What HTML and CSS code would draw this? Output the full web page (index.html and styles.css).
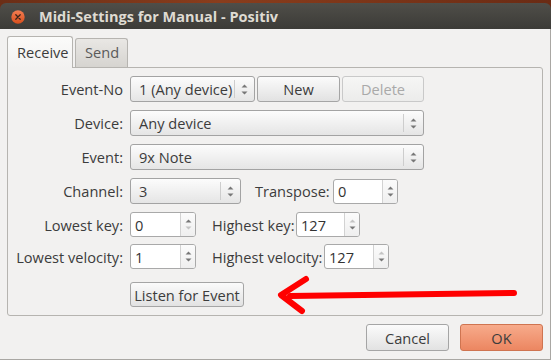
FILE: index.html
```html
<!DOCTYPE html>
<html>
<head>
<meta charset="utf-8">
<link rel="stylesheet" href="styles.css">
</head>
<body>
<div class="window">
  <div class="titlebar">
    <span class="close">
      <svg width="14" height="14" viewBox="0 0 14 14">
        <defs>
          <linearGradient id="cg" x1="0" y1="0" x2="0" y2="1">
            <stop offset="0" stop-color="#f47d52"/>
            <stop offset="1" stop-color="#d84f1d"/>
          </linearGradient>
        </defs>
        <circle cx="7" cy="7" r="6.7" fill="url(#cg)"/>
        <path d="M4.8 4.8 L9.2 9.2 M9.2 4.8 L4.8 9.2" stroke="#3d2418" stroke-width="1.3" stroke-linecap="round"/>
      </svg>
    </span>
    <span class="title">Midi-Settings for Manual - Positiv</span>
  </div>
  <div class="content">
    <div class="tabs">
      <div class="tab active">Receive</div>
      <div class="tab">Send</div>
    </div>
    <div class="frame">
      <div class="row row-combo">
        <span class="lbl">Event-No</span>
        <div class="combo w-eventno"><span class="val">1 (Any device)</span><span class="sep"></span><span class="arrows"><svg width="7" height="13" viewBox="0 0 7 13"><path d="M0.5 4.5 L3.5 1.5 L6.5 4.5Z M0.5 8.5 L3.5 11.5 L6.5 8.5Z" fill="#777"/></svg></span></div>
        <button class="btn new">New</button>
        <button class="btn delete" disabled>Delete</button>
      </div>
      <div class="row row-combo">
        <span class="lbl">Device:</span>
        <div class="combo w-full"><span class="val">Any device</span><span class="sep"></span><span class="arrows"><svg width="7" height="13" viewBox="0 0 7 13"><path d="M0.5 4.5 L3.5 1.5 L6.5 4.5Z M0.5 8.5 L3.5 11.5 L6.5 8.5Z" fill="#777"/></svg></span></div>
      </div>
      <div class="row row-combo">
        <span class="lbl">Event:</span>
        <div class="combo w-full"><span class="val">9x Note</span><span class="sep"></span><span class="arrows"><svg width="7" height="13" viewBox="0 0 7 13"><path d="M0.5 4.5 L3.5 1.5 L6.5 4.5Z M0.5 8.5 L3.5 11.5 L6.5 8.5Z" fill="#777"/></svg></span></div>
      </div>
      <div class="row row-combo">
        <span class="lbl">Channel:</span>
        <div class="combo w-channel"><span class="val">3</span><span class="sep"></span><span class="arrows"><svg width="7" height="13" viewBox="0 0 7 13"><path d="M0.5 4.5 L3.5 1.5 L6.5 4.5Z M0.5 8.5 L3.5 11.5 L6.5 8.5Z" fill="#777"/></svg></span></div>
        <span class="lbl2 w-transpose">Transpose:</span>
        <div class="spin w-sp65"><span class="entry">0</span><span class="spinbtn"><svg width="7" height="13" viewBox="0 0 7 13"><path d="M0.5 4.5 L3.5 1.5 L6.5 4.5Z M0.5 8.5 L3.5 11.5 L6.5 8.5Z" fill="#777"/></svg></span></div>
      </div>
      <div class="row row-spin">
        <span class="lbl">Lowest key:</span>
        <div class="spin w-sp66"><span class="entry">0</span><span class="spinbtn"><svg width="7" height="13" viewBox="0 0 7 13"><path d="M0.5 4.5 L3.5 1.5 L6.5 4.5Z" fill="#777"/><path d="M0.5 8.5 L3.5 11.5 L6.5 8.5Z" fill="#c4c4c4"/></svg></span></div>
        <span class="lbl2 w-hkey">Highest key:</span>
        <div class="spin w-sp64"><span class="entry">127</span><span class="spinbtn"><svg width="7" height="13" viewBox="0 0 7 13"><path d="M0.5 4.5 L3.5 1.5 L6.5 4.5Z" fill="#c4c4c4"/><path d="M0.5 8.5 L3.5 11.5 L6.5 8.5Z" fill="#777"/></svg></span></div>
      </div>
      <div class="row row-spin row-vel">
        <span class="lbl">Lowest velocity:</span>
        <div class="spin w-sp66"><span class="entry">1</span><span class="spinbtn"><svg width="7" height="13" viewBox="0 0 7 13"><path d="M0.5 4.5 L3.5 1.5 L6.5 4.5Z M0.5 8.5 L3.5 11.5 L6.5 8.5Z" fill="#777"/></svg></span></div>
        <span class="lbl2 w-hvel">Highest velocity:</span>
        <div class="spin w-sp65"><span class="entry">127</span><span class="spinbtn"><svg width="7" height="13" viewBox="0 0 7 13"><path d="M0.5 4.5 L3.5 1.5 L6.5 4.5Z" fill="#c4c4c4"/><path d="M0.5 8.5 L3.5 11.5 L6.5 8.5Z" fill="#777"/></svg></span></div>
      </div>
      <div class="row row-listen">
        <span class="lbl"></span>
        <button class="btn listen">Listen for Event</button>
      </div>
    </div>
    <div class="actions">
      <button class="btn cancel">Cancel</button>
      <button class="btn ok">OK</button>
    </div>
  </div>
  <svg class="annot" width="551" height="360" viewBox="0 0 551 360">
    <path d="M514 293 L290 296" stroke="#ff0000" stroke-width="6" stroke-linecap="round" fill="none"/>
    <path d="M306 279 L281 295 L302 311" stroke="#ff0000" stroke-width="6" stroke-linecap="round" stroke-linejoin="round" fill="none"/>
  </svg>
</div>
</body>
</html>
```

FILE: styles.css
```css
* { box-sizing: border-box; }
html, body { margin: 0; padding: 0; }
body {
  width: 551px;
  height: 360px;
  overflow: hidden;
  background: linear-gradient(90deg, #6b2e16, #8a3d1c 40%, #6a2b14);
  font-family: "Open Sans", "Noto Sans", sans-serif;
  font-size: 14.6px;
  color: #3c3c3c;
}
.window {
  position: relative;
  width: 551px;
  height: 360px;
  padding-top: 3px;
  display: flex;
  flex-direction: column;
}
.titlebar {
  height: 26px;
  flex: none;
  background: linear-gradient(#4f4e49, #3c3b37);
  border-radius: 6px 6px 0 0;
  display: flex;
  align-items: center;
  padding-left: 11px;
}
.close { display: flex; width: 14px; height: 14px; margin-top: 1px; }
.title {
  margin-left: 14px;
  color: #dfdbd2;
  font-weight: bold;
  font-size: 14.5px;
  margin-top: 1px;
}
.content {
  flex: 1;
  background: #f2f1f0;
  border-right: 1px solid #a9a7a3;
  border-bottom: 1px solid #a9a7a3;
  padding: 7px 7px 0 7px;
  display: flex;
  flex-direction: column;
}
.tabs {
  display: flex;
  align-items: flex-end;
  height: 31px;
  gap: 2px;
  position: relative;
  z-index: 1;
}
.tab {
  height: 29px;
  padding: 0 8px 0 9px;
  border: 1px solid #b6b4b0;
  border-bottom: none;
  border-radius: 3px 3px 0 0;
  background: linear-gradient(#e9e7e4, #d6d4d0);
  color: #5a5a5a;
  display: flex;
  align-items: center;
  padding-bottom: 2px;
}
.tab.active {
  height: 32px;
  margin-bottom: -1px;
  width: 66px;
  padding-left: 9px;
  background: linear-gradient(#fbfbfa, #f2f1f0);
  color: #3c3c3c;
}
.frame {
  border: 1px solid #b6b4b0;
  border-radius: 0 3px 3px 3px;
  width: 536px;
  padding: 8px 8px 8px 8px;
  display: flex;
  flex-direction: column;
  gap: 8px;
}
.row {
  display: flex;
  align-items: center;
}
.row-combo { height: 26px; }
.row-spin { height: 25px; }
.row-vel { margin-top: -1px; }
.row-listen { height: 25px; margin-top: 5px; }
.lbl {
  width: 107px;
  flex: none;
  text-align: right;
  margin-right: 7px;
  white-space: nowrap;
}
.lbl2 {
  flex: none;
  text-align: right;
  white-space: nowrap;
  margin-right: 4px;
}
.w-transpose { width: 74px; margin-left: 14px; }
.w-hkey { width: 82px; margin-left: 16px; margin-right: 2px; }
.w-hvel { width: 110px; margin-left: 16px; margin-right: 2px; }

.combo {
  height: 26px;
  border: 1px solid #a3a3a3;
  border-radius: 3px;
  background: linear-gradient(#fcfcfc, #e5e5e5);
  display: flex;
  align-items: center;
  flex: none;
}
.combo .val { flex: 1; padding-left: 8px; white-space: nowrap; }
.combo .sep { width: 1px; height: 18px; background: #cdcdcd; }
.combo .arrows { width: 19px; display: flex; justify-content: center; }
.w-eventno { width: 125px; }
.w-full { width: 294px; }
.w-channel { width: 111px; }

.spin {
  height: 25px;
  border: 1px solid #a9a9a9;
  border-radius: 3px;
  background: #ffffff;
  display: flex;
  flex: none;
  overflow: hidden;
}
.spin .entry { flex: 1; padding-left: 4px; display: flex; align-items: center; color: #333; }
.spin .spinbtn {
  width: 15px;
  border-left: 1px solid #d2d2d2;
  background: linear-gradient(#fbfbfb, #efefef);
  display: flex;
  align-items: center;
  justify-content: center;
}
.w-sp66 { width: 66px; }
.w-sp65 { width: 65px; }
.w-sp64 { width: 64px; }

.btn {
  font-family: inherit;
  font-size: 14.6px;
  color: #3c3c3c;
  border: 1px solid #a5a5a5;
  border-radius: 3px;
  background: linear-gradient(#fbfbfb, #e2e2e2);
  padding: 0;
  height: 26px;
  flex: none;
}
.new { width: 83px; margin-left: 2px; }
.delete {
  width: 82px;
  margin-left: 2px;
  color: #a9a9a9;
  border-color: #c9c9c9;
  background: linear-gradient(#f6f6f5, #ececeb);
}
.listen { width: 114px; height: 25px; }
.actions {
  display: flex;
  justify-content: flex-end;
  gap: 11px;
  margin-top: 8px;
  padding-right: 0;
}
.cancel, .ok { width: 83px; height: 27px; }
.ok {
  background: linear-gradient(#f7ab8b, #ec8661);
  border-color: #cf7450;
  color: #3c3c3c;
}
.annot {
  position: absolute;
  left: 0;
  top: 0;
  pointer-events: none;
}
```
